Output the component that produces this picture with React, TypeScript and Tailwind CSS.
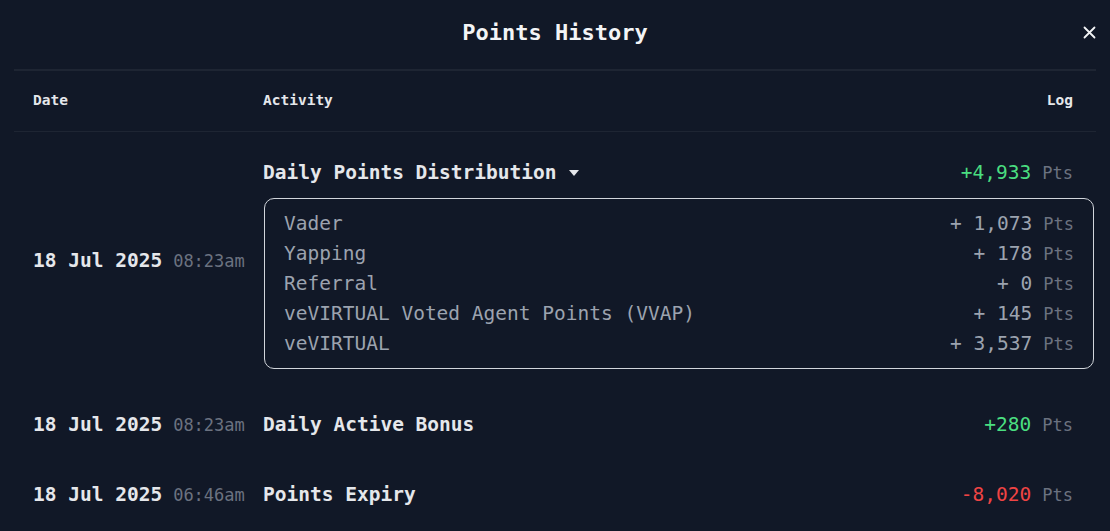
import React from "react";

const mono = { fontFamily: '"DejaVu Sans Mono", "Liberation Mono", monospace' };

function Amount({ value, color }: { value: string; color: string }) {
  return (
    <div className="flex items-baseline">
      <span className={`text-[19.5px] leading-[24px] ${color}`}>{value}</span>
      <span className="ml-[11px] text-[17px] leading-[24px] text-[#6b7280]">Pts</span>
    </div>
  );
}

function DateCell({ date, time }: { date: string; time: string }) {
  return (
    <div className="flex w-[230px] shrink-0 items-baseline">
      <span className="text-[19.5px] font-bold leading-[24px] text-[#e5e7eb]">{date}</span>
      <span className="ml-[11px] text-[17px] leading-[24px] text-[#6b7280]">{time}</span>
    </div>
  );
}

const items = [
  ["Vader", "+ 1,073"],
  ["Yapping", "+ 178"],
  ["Referral", "+ 0"],
  ["veVIRTUAL Voted Agent Points (VVAP)", "+ 145"],
  ["veVIRTUAL", "+ 3,537"],
];

export default function App() {
  return (
    <div className="h-[531px] w-full overflow-hidden bg-[#111827]" style={mono}>
      <div className="relative flex h-[64px] items-center justify-center">
        <h1 className="text-[22px] font-bold text-[#f3f4f6]">Points History</h1>
        <button className="absolute right-[14px] top-[25px] flex h-[14px] w-[14px] items-center justify-center">
          <svg width="13" height="13" viewBox="0 0 13 13" fill="none">
            <path d="M1.5 1.5 L11.5 11.5 M11.5 1.5 L1.5 11.5" stroke="#f3f4f6" strokeWidth="1.8" strokeLinecap="round" />
          </svg>
        </button>
      </div>
      <div className="mx-[14px] mt-[5px] h-[2px] bg-[#1e2533]" />

      <div className="mx-[14px]">
        <div className="flex h-[60px] items-center pl-[19px] pr-[23px] text-[14.5px] font-bold text-[#e5e7eb]">
          <div className="w-[230px]">Date</div>
          <div className="flex-1">Activity</div>
          <div>Log</div>
        </div>
        <div className="h-px bg-[#1e2533]" />

        <div className="flex pl-[19px] pr-[2px] pt-[29px]">
          <div className="flex w-[230px] shrink-0 items-center pb-[8px]">
            <DateCell date="18 Jul 2025" time="08:23am" />
          </div>
          <div className="flex-1 pl-[1px]">
            <div className="flex items-center justify-between pr-[21px]">
              <div className="flex items-center">
                <span className="-ml-[1px] text-[19.5px] font-bold leading-[24px] text-[#e5e7eb]">Daily Points Distribution</span>
                <svg className="ml-[12px]" width="10" height="6" viewBox="0 0 10 6">
                  <path d="M0 0 H10 L5 6 Z" fill="#e5e7eb" />
                </svg>
              </div>
              <Amount value="+4,933" color="text-[#4ade80]" />
            </div>
            <div className="mt-[13px] rounded-[10px] border border-[#d1d5db] px-[19px] pb-[9px] pt-[10px]">
              {items.map(([label, val]) => (
                <div key={label} className="flex h-[30px] items-center justify-between">
                  <span className="text-[19.5px] text-[#9ca3af]">{label}</span>
                  <div className="flex items-baseline">
                    <span className="text-[19.5px] text-[#9ca3af]">{val}</span>
                    <span className="ml-[11px] text-[17px] text-[#6b7280]">Pts</span>
                  </div>
                </div>
              ))}
            </div>
          </div>
        </div>

        <div className="mt-[44px] flex items-center pl-[19px] pr-[23px]">
          <DateCell date="18 Jul 2025" time="08:23am" />
          <div className="flex-1 text-[19.5px] font-bold leading-[24px] text-[#e5e7eb]">Daily Active Bonus</div>
          <Amount value="+280" color="text-[#4ade80]" />
        </div>

        <div className="mt-[46px] flex items-center pl-[19px] pr-[23px]">
          <DateCell date="18 Jul 2025" time="06:46am" />
          <div className="flex-1 text-[19.5px] font-bold leading-[24px] text-[#e5e7eb]">Points Expiry</div>
          <Amount value="-8,020" color="text-[#ef4444]" />
        </div>
      </div>
    </div>
  );
}
